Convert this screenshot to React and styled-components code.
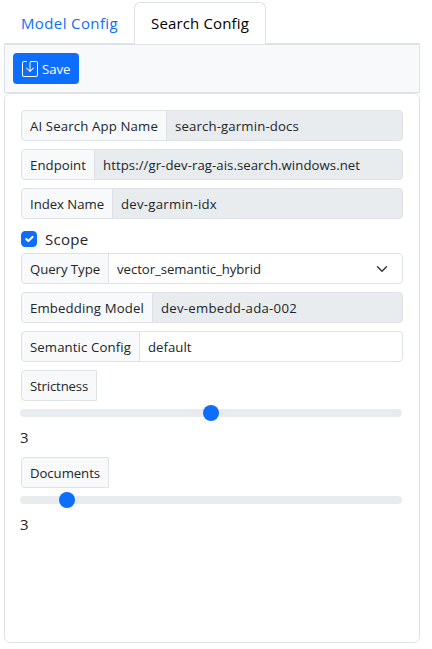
import React, { useState } from "react";
import styled, { createGlobalStyle, css } from "styled-components";
import { BsSave } from "react-icons/bs";

const GlobalStyle = createGlobalStyle`
  *, *::before, *::after { box-sizing: border-box; }
  body {
    margin: 0;
    background: #fff;
    color: #212529;
    font-family: "Open Sans", "Noto Sans", sans-serif;
    font-size: 15px;
    line-height: 24px;
  }
`;

const Page = styled.main`
  display: flex;
  flex-direction: column;
  width: 416px;
  margin: 2px 0 0 4px;
`;

const Tabs = styled.nav`
  display: flex;
  height: 42px;
  border-bottom: 1px solid #dee2e6;
`;

const Tab = styled.button`
  flex: none;
  width: ${(p) => p.$width}px;
  height: 42px;
  padding: 0 0 1px 16px;
  border: 1px solid transparent;
  border-radius: 6px 6px 0 0;
  background: none;
  color: #0d6efd;
  font: inherit;
  letter-spacing: ${(p) => p.$spacing}px;
  text-align: left;
  white-space: nowrap;
  ${(p) =>
    p.$active &&
    css`
      border-color: #dee2e6 #dee2e6 #fff;
      background: #fff;
      color: #000;
    `}
`;

const Toolbar = styled.div`
  display: flex;
  height: 49px;
  padding: 8px;
  border: 1px solid #dee2e6;
  background: #f8f9fa;
`;

const SaveButton = styled.button`
  display: flex;
  align-items: center;
  gap: 4px;
  width: 66px;
  height: 31px;
  padding: 0 0 0 9px;
  border: 0;
  border-radius: 4px;
  background: #0d6efd;
  color: #fff;
  font: inherit;
  font-size: 13.2px;
  font-weight: 500;
  letter-spacing: -0.05px;
`;

const Panel = styled.section`
  display: flex;
  flex-direction: column;
  height: 550px;
  padding: 16px;
  border: 1px solid #dee2e6;
  border-radius: 6px;
`;

const Group = styled.div`
  display: flex;
  height: 31px;
  margin-bottom: ${(p) => (p.$tight ? 0 : 8)}px;
`;

const Label = styled.label`
  flex: none;
  width: ${(p) => p.$width}px;
  padding: 1px 0 0 8px;
  border: 1px solid #dee2e6;
  border-radius: 4px 0 0 4px;
  background: #f8f9fa;
  font-size: 13.2px;
  line-height: 28px;
  letter-spacing: ${(p) => p.$spacing}px;
  white-space: nowrap;
`;

const control = css`
  flex: 1;
  min-width: 0;
  height: 31px;
  margin: 0 0 0 -1px;
  padding: 0 8px;
  border: 1px solid #dee2e6;
  border-radius: 0 4px 4px 0;
  outline: 0;
  background-color: #fff;
  color: #212529;
  font: inherit;
  font-size: 13.2px;
  letter-spacing: ${(p) => p.$spacing}px;
`;

const Input = styled.input`
  ${control}
  &:disabled {
    background-color: #e9ecef;
    color: #212529;
    -webkit-text-fill-color: #212529;
    opacity: 1;
  }
`;

const Select = styled.select`
  ${control}
  appearance: none;
  background-image: url("data:image/svg+xml,%3csvg xmlns='http://www.w3.org/2000/svg' viewBox='0 0 16 16'%3e%3cpath fill='none' stroke='%23343a40' stroke-linecap='round' stroke-linejoin='round' stroke-width='2' d='m2 5 6 6 6-6'/%3e%3c/svg%3e");
  background-repeat: no-repeat;
  background-position: right 12px center;
  background-size: 16px 12px;
`;

const CheckRow = styled.label`
  display: flex;
  align-items: center;
  gap: 8px;
  height: 24px;
  margin-bottom: 2px;
  letter-spacing: 0.29px;
`;

const Checkbox = styled.input`
  appearance: none;
  width: 16px;
  height: 16px;
  margin: 0;
  border: 1px solid #dee2e6;
  border-radius: 4px;
  &:checked {
    border-color: #0d6efd;
    background: #0d6efd
      url("data:image/svg+xml,%3csvg xmlns='http://www.w3.org/2000/svg' viewBox='0 0 20 20'%3e%3cpath fill='none' stroke='%23fff' stroke-linecap='round' stroke-linejoin='round' stroke-width='3' d='m6 10 3 3 6-6'/%3e%3c/svg%3e")
      center / contain no-repeat;
  }
`;

const Range = styled.input`
  appearance: none;
  width: 382px;
  height: 24px;
  margin: 0 0 0 -1px;
  padding: 0;
  background: transparent;
  &::-webkit-slider-runnable-track {
    height: 8px;
    border-radius: 8px;
    background: #e9ecef;
  }
  &::-webkit-slider-thumb {
    appearance: none;
    width: 16px;
    height: 16px;
    margin-top: -4px;
    border: 0;
    border-radius: 50%;
    background: #0d6efd;
  }
`;

const RangeValue = styled.output`
  display: block;
  height: 24px;
  margin: 0 0 8px -1px;
`;

function Field({ label, width, spacing, value, valueSpacing, disabled }) {
  return (
    <Group>
      <Label $width={width} $spacing={spacing}>{label}</Label>
      <Input aria-label={label} defaultValue={value} disabled={disabled} $spacing={valueSpacing} />
    </Group>
  );
}

function Slider({ label, width, spacing, max }) {
  const [value, setValue] = useState(3);
  return (
    <>
      <Group $tight>
        <Label $width={width} $spacing={spacing}>{label}</Label>
      </Group>
      <Range
        type="range"
        aria-label={label}
        min="1"
        max={max}
        value={value}
        onChange={(e) => setValue(Number(e.target.value))}
      />
      <RangeValue>{value}</RangeValue>
    </>
  );
}

export default function App() {
  return (
    <>
      <GlobalStyle />
      <Page>
        <Tabs>
          <Tab $width={130} $spacing={0.38}>Model Config</Tab>
          <Tab $width={132} $spacing={0.15} $active>Search Config</Tab>
        </Tabs>
        <Toolbar>
          <SaveButton>
            <BsSave size={16} />
            Save
          </SaveButton>
        </Toolbar>
        <Panel>
          <Field label="AI Search App Name" width={146} spacing={0.14} value="search-garmin-docs" valueSpacing={0.14} disabled />
          <Field label="Endpoint" width={74} spacing={0.05} value="https://gr-dev-rag-ais.search.windows.net" valueSpacing={0.057} disabled />
          <Field label="Index Name" width={92} spacing={-0.04} value="dev-garmin-idx" valueSpacing={0.26} disabled />
          <CheckRow>
            <Checkbox type="checkbox" defaultChecked />
            Scope
          </CheckRow>
          <Group>
            <Label $width={88} $spacing={-0.05}>Query Type</Label>
            <Select aria-label="Query Type" $spacing={-0.05}>
              <option>vector_semantic_hybrid</option>
            </Select>
          </Group>
          <Field label="Embedding Model" width={132} spacing={0.15} value="dev-embedd-ada-002" valueSpacing={0.258} disabled />
          <Field label="Semantic Config" width={119} spacing={0.11} value="default" valueSpacing={0.02} />
          <Slider label="Strictness" width={76} spacing={-0.17} max={5} />
          <Slider label="Documents" width={88} spacing={-0.066} max={20} />
        </Panel>
      </Page>
    </>
  );
}
